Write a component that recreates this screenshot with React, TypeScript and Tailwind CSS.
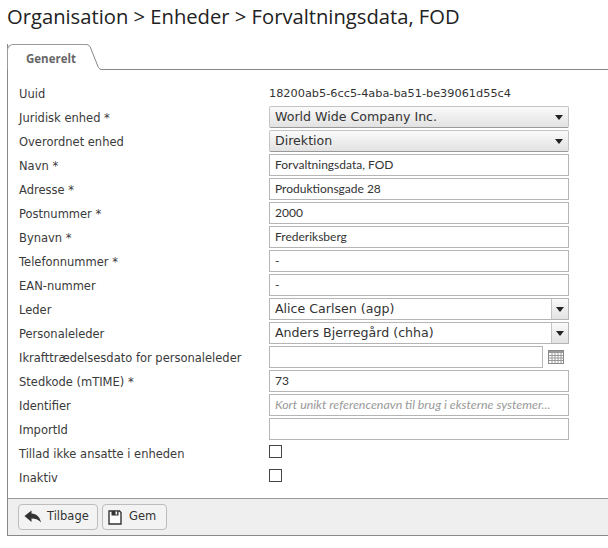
const label = "text-[11.5px] text-[#3a3a3a] w-[261px] shrink-0 pl-[11px] h-[24px] pt-[2px] leading-[22px]";
const inputBox = "h-[22px] w-[300px] border border-[#b5b5b5] bg-white flex items-center pl-[5px] text-[12px] text-[#333] [font-family:Lato,sans-serif]";

function Caret() {
  return (
    <svg width="8" height="5" viewBox="0 0 8 5" className="block">
      <path d="M0 0H8L4 5Z" fill="#222" />
    </svg>
  );
}

function Row({ name, children }: { name: string; children: React.ReactNode }) {
  return (
    <div className="flex h-[24px] items-center">
      <div className={label}>{name}</div>
      {children}
    </div>
  );
}

function Select({ value }: { value: string }) {
  return (
    <div className="h-[22px] w-[300px] border border-[#c4c4c4] border-b-[#999] rounded-[2px] bg-gradient-to-b from-[#fafafa] to-[#e2e2e2] flex items-center justify-between pl-[5px] pr-[5px] text-[12.6px] text-[#333]">
      <span>{value}</span>
      <Caret />
    </div>
  );
}

function Combo({ value }: { value: string }) {
  return (
    <div className="h-[22px] w-[300px] border border-[#b5b5b5] bg-white flex items-center justify-between pl-[5px] text-[12.6px] text-[#333]">
      <span>{value}</span>
      <div className="h-full w-[17px] border-l border-[#c4c4c4] bg-gradient-to-b from-[#fafafa] to-[#e2e2e2] flex items-center justify-center">
        <Caret />
      </div>
    </div>
  );
}

function Input({ value }: { value?: string }) {
  return <div className={inputBox}>{value}</div>;
}

function CheckBox() {
  return <div className="h-[13px] w-[13px] border border-[#444] bg-white mb-[3px]" />;
}

function CalendarIcon() {
  return (
    <svg width="16" height="14" viewBox="0 0 16 14" className="ml-[5px] block">
      <rect x="0.5" y="0.5" width="15" height="13" fill="#fff" stroke="#888" />
      <rect x="1" y="1" width="14" height="2" fill="#999" />
      <path d="M1 5.5H15M1 8H15M1 10.5H15M4 3V13M7 3V13M10 3V13M13 3V13" stroke="#999" />
    </svg>
  );
}

function BackIcon() {
  return (
    <svg width="18" height="14" viewBox="0 0 18 14" className="block">
      <path d="M0.5 6L7.5 0.5V3.6C12.5 3.8 16 7 17 12.5C14.8 9.8 12 8.4 7.5 8.4V12Z" fill="#333" />
    </svg>
  );
}

function SaveIcon() {
  return (
    <svg width="14" height="15" viewBox="0 0 14 15" className="block">
      <path d="M1 1H11.5L13 2.5V14H1Z" fill="#fff" stroke="#333" strokeWidth="1.4" />
      <rect x="3.5" y="1" width="7" height="4.5" fill="#333" />
      <rect x="7.5" y="1.5" width="1.6" height="3" fill="#fff" />
    </svg>
  );
}

function Button({ icon, text, className }: { icon: React.ReactNode; text: string; className: string }) {
  return (
    <div className={`h-[26px] border border-[#bdbdbd] rounded-[4px] bg-[#f3f3f3] flex items-center text-[11.5px] text-[#333] ${className}`}>
      {icon}
      <span>{text}</span>
    </div>
  );
}

export default function App() {
  return (
    <div className="w-[608px] h-[548px] overflow-hidden bg-white [font-family:'DejaVu_Sans',Verdana,sans-serif]">
      <h1 className="pl-[7px] h-[44px] text-[20.2px] leading-[32px] text-[#222] [font-family:'Open_Sans',sans-serif]">
        Organisation &gt; Enheder &gt; Forvaltningsdata, FOD
      </h1>
      <div className="ml-[7px] w-[610px] h-[492px] flex flex-col border-l border-b border-[#888]">
        <div className="relative h-[26px] border-b border-[#888] -ml-px shrink-0">
          <div className="absolute left-0 top-0 h-[26px] w-[79px] border-l border-t border-[#999] rounded-tl-[6px] bg-white pl-[18px] text-[11.5px] font-bold text-[#666] leading-[27px] [font-family:'Open_Sans',sans-serif]">
            Generelt
          </div>
          <svg width="16" height="26" viewBox="0 0 16 26" className="absolute left-[79px] top-0 block">
            <path d="M0 0.5C3 0.5 4 2 5 5L11 20C12 23 13 25 15 25.5H16V26H0Z" fill="#fff" />
            <path d="M0 0.5C3 0.5 4 2 5 5L11 20C12 23 13 25 15 25.5H16" fill="none" stroke="#888" />
          </svg>
        </div>
        <div className="flex-1 pt-[11px]">
          <Row name="Uuid"><span className="text-[11.3px] text-[#333] h-[24px] pt-[2px] leading-[22px]">18200ab5-6cc5-4aba-ba51-be39061d55c4</span></Row>
          <Row name="Juridisk enhed *"><Select value="World Wide Company Inc." /></Row>
          <Row name="Overordnet enhed"><Select value="Direktion" /></Row>
          <Row name="Navn *"><Input value="Forvaltningsdata, FOD" /></Row>
          <Row name="Adresse *"><Input value="Produktionsgade 28" /></Row>
          <Row name="Postnummer *"><Input value="2000" /></Row>
          <Row name="Bynavn *"><Input value="Frederiksberg" /></Row>
          <Row name="Telefonnummer *"><Input value="-" /></Row>
          <Row name="EAN-nummer"><Input value="-" /></Row>
          <Row name="Leder"><Combo value="Alice Carlsen (agp)" /></Row>
          <Row name="Personaleleder"><Combo value="Anders Bjerregård (chha)" /></Row>
          <Row name="Ikrafttrædelsesdato for personaleleder">
            <div className="h-[22px] w-[274px] border border-[#b5b5b5] bg-white" />
            <CalendarIcon />
          </Row>
          <Row name="Stedkode (mTIME) *"><Input value="73" /></Row>
          <Row name="Identifier">
            <div className={inputBox}>
              <span className="italic text-[#999] text-[12.4px]">Kort unikt referencenavn til brug i eksterne systemer...</span>
            </div>
          </Row>
          <Row name="ImportId"><Input /></Row>
          <Row name="Tillad ikke ansatte i enheden"><CheckBox /></Row>
          <Row name="Inaktiv"><CheckBox /></Row>
        </div>
        <div className="h-[37px] shrink-0 border-t border-[#999] bg-[#efefef] flex items-center gap-[4px] pl-[10px]">
          <Button icon={<BackIcon />} text="Tilbage" className="w-[80px] pl-[5px] gap-[5px]" />
          <Button icon={<SaveIcon />} text="Gem" className="w-[65px] pl-[5px] gap-[7px]" />
        </div>
      </div>
    </div>
  );
}
